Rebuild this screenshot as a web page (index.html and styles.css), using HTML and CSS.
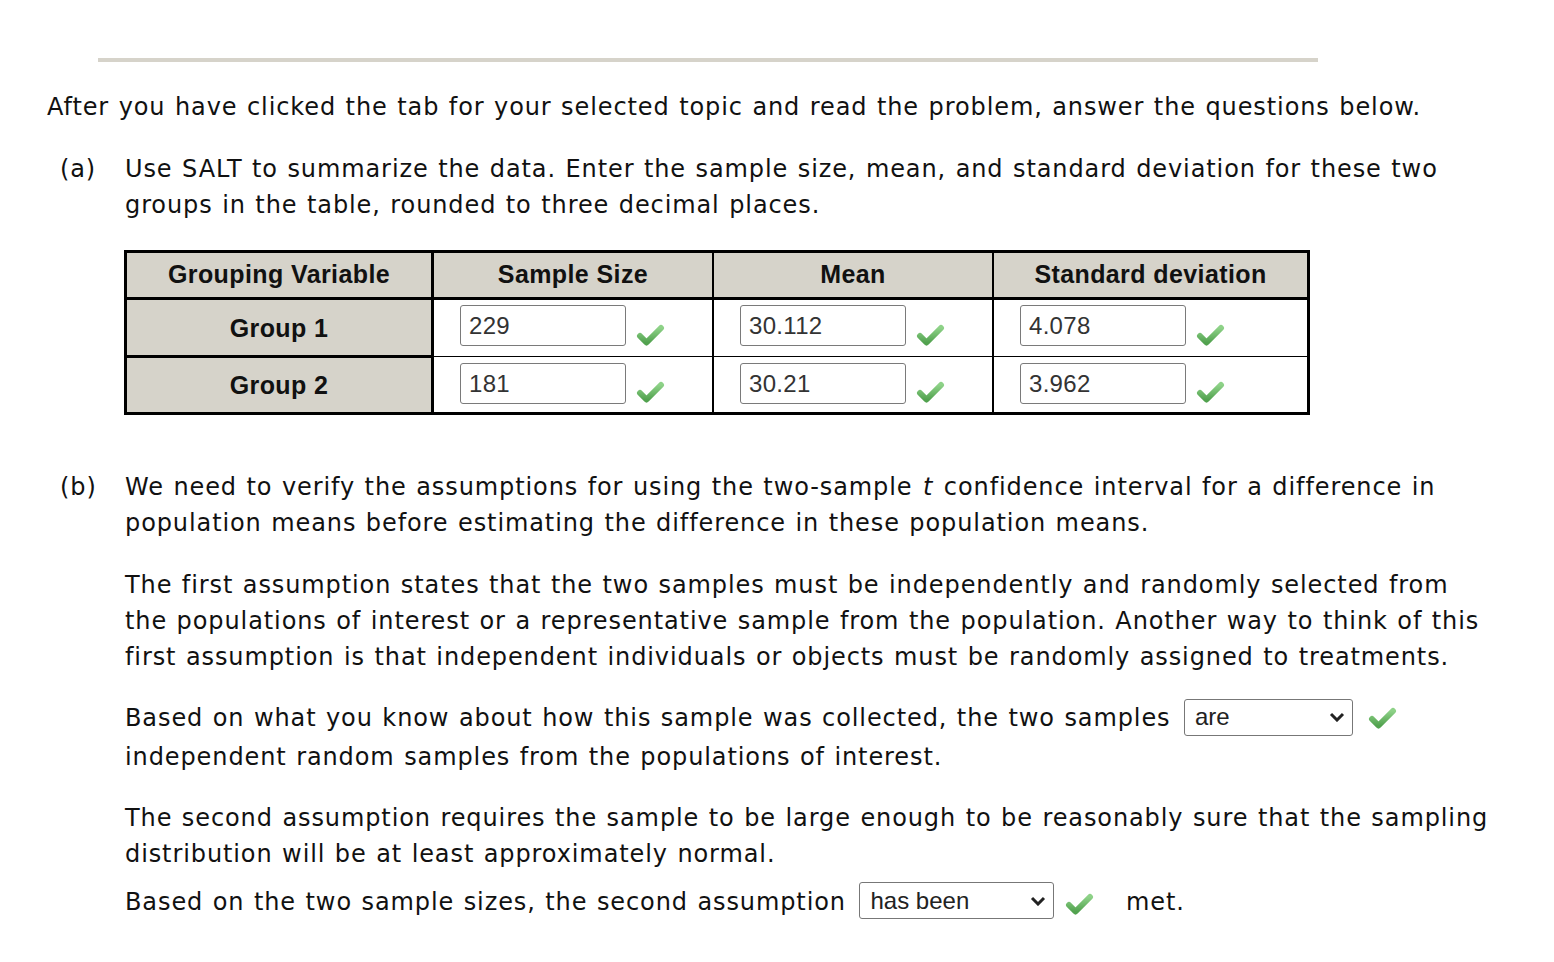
FILE: index.html
```html
<!DOCTYPE html>
<html>
<head>
<meta charset="utf-8">
<link rel="stylesheet" href="styles.css">
</head>
<body>
<div class="page">
  <div class="rule"></div>
  <p class="intro">After you have clicked the tab for your selected topic and read the problem, answer the questions below.</p>

  <div class="part part-a">
    <span class="label">(a)</span>
    <div class="body">
      <p>Use SALT to summarize the data. Enter the sample size, mean, and standard deviation for these two groups in the table, rounded to three decimal places.</p>
      <table class="data">
        <thead>
          <tr>
            <th class="c1">Grouping Variable</th>
            <th class="c2">Sample Size</th>
            <th class="c3">Mean</th>
            <th class="c4">Standard deviation</th>
          </tr>
        </thead>
        <tbody>
          <tr class="r1">
            <th>Group 1</th>
            <td><div class="cell"><span class="box">229</span><svg class="check" viewBox="0 0 30 24"><use href="#chk"/></svg></div></td>
            <td><div class="cell"><span class="box">30.112</span><svg class="check" viewBox="0 0 30 24"><use href="#chk"/></svg></div></td>
            <td><div class="cell"><span class="box">4.078</span><svg class="check" viewBox="0 0 30 24"><use href="#chk"/></svg></div></td>
          </tr>
          <tr class="r2">
            <th>Group 2</th>
            <td><div class="cell"><span class="box">181</span><svg class="check" viewBox="0 0 30 24"><use href="#chk"/></svg></div></td>
            <td><div class="cell"><span class="box">30.21</span><svg class="check" viewBox="0 0 30 24"><use href="#chk"/></svg></div></td>
            <td><div class="cell"><span class="box">3.962</span><svg class="check" viewBox="0 0 30 24"><use href="#chk"/></svg></div></td>
          </tr>
        </tbody>
      </table>
    </div>
  </div>

  <div class="part part-b">
    <span class="label">(b)</span>
    <div class="body">
      <p><span>We need to verify the assumptions for using the two-sample</span> <i class="var">t</i> <span>confidence interval for a difference in</span> <span>population means before estimating the difference in these population means.</span></p>
      <p class="p2">The first assumption states that the two samples must be independently and randomly selected from the populations of interest or a representative sample from the population. Another way to think of this first assumption is that independent individuals or objects must be randomly assigned to treatments.</p>
      <p class="p3">Based on what you know about how this sample was collected, the two samples <span class="sel sel-are"><span>are</span><svg class="chev" viewBox="0 0 16 10"><path d="M2 2 L8 8 L14 2" fill="none" stroke="#222" stroke-width="3"/></svg></span><svg class="check inl" viewBox="0 0 30 24"><use href="#chk"/></svg><br>independent random samples from the populations of interest.</p>
      <p class="p4">The second assumption requires the sample to be large enough to be reasonably sure that the sampling distribution will be at least approximately normal.</p>
      <p class="p5">Based on the two sample sizes, the second assumption <span class="sel sel-has"><span>has been</span><svg class="chev" viewBox="0 0 16 10"><path d="M2 2 L8 8 L14 2" fill="none" stroke="#222" stroke-width="3"/></svg></span><svg class="check inl2" viewBox="0 0 30 24"><use href="#chk"/></svg> <span class="met">met.</span></p>
    </div>
  </div>
</div>

<svg width="0" height="0" class="defs">
  <defs>
    <linearGradient id="g" x1="0" y1="0" x2="0" y2="1">
      <stop offset="0" stop-color="#8ed288"/>
      <stop offset="1" stop-color="#52a24f"/>
    </linearGradient>
    <symbol id="chk" viewBox="0 0 30 24">
      <path d="M5 13 L11.5 19.5 L26 5" fill="none" stroke="url(#g)" stroke-width="6" stroke-linecap="round" stroke-linejoin="round"/>
    </symbol>
  </defs>
</svg>
</body>
</html>
```

FILE: styles.css
```css
html, body {
  margin: 0;
  padding: 0;
  background: #fff;
}
body {
  font-family: "DejaVu Sans", Verdana, sans-serif;
  font-size: 24px;
  line-height: 36px;
  color: #111;
  letter-spacing: 0.9px;
  word-spacing: 1px;
}
.page {
  padding: 58px 0 0 47px;
  width: 1450px;
}
.rule {
  margin-left: 51px;
  width: 1220px;
  height: 4px;
  background: #d6d3ca;
}
p {
  margin: 0;
}
.intro {
  margin-top: 27px;
}
.part {
  display: flex;
  margin-left: 13px;
}
.part-a {
  margin-top: 26px;
}
.part-b {
  margin-top: 54px;
}
.label {
  width: 65px;
  flex: none;
}
.body {
  flex: 1;
}
.var {
  padding: 0 1px;
}
.data {
  margin-top: 27px;
  margin-left: -1px;
  border-collapse: collapse;
  border: 3px solid #000;
  font-family: "Liberation Sans", Arial, sans-serif;
  letter-spacing: 0;
  word-spacing: 0;
}
.data th, .data td {
  padding: 0;
}
.data thead th {
  background: #d6d3ca;
  height: 41px;
  padding-bottom: 3px;
  font-weight: bold;
  font-size: 25px;
  letter-spacing: 0.4px;
  border-bottom: 3px solid #000;
  border-right: 2px solid #000;
  text-align: center;
  vertical-align: middle;
}
.data thead th.c1 { width: 304px; border-right: 3px solid #000; }
.data thead th.c2 { width: 278px; }
.data thead th.c3 { width: 278px; }
.data thead th.c4 { width: 313px; }
.data tbody th {
  background: #d6d3ca;
  font-weight: bold;
  font-size: 25px;
  letter-spacing: 0.4px;
  border-right: 3px solid #000;
  text-align: center;
}
.data tbody tr.r1 th {
  border-bottom: 3px solid #000;
  height: 55px;
}
.data tbody tr.r1 td {
  border-bottom: 1px solid #000;
  height: 56px;
}
.data tbody tr.r2 th, .data tbody tr.r2 td {
  height: 54px;
}
.data td {
  border-right: 2px solid #000;
}
.cell {
  display: flex;
  align-items: center;
  padding-left: 26px;
}
.box {
  box-sizing: border-box;
  width: 166px;
  height: 41px;
  border: 1px solid #7a7a7a;
  border-radius: 3px;
  padding: 0 8px;
  font-size: 24px;
  letter-spacing: 0.3px;
  line-height: 39px;
  color: #333;
  margin-top: -5px;
}
.r2 .box {
  margin-top: -3px;
}
.check {
  width: 30px;
  height: 24px;
  margin-left: 9px;
  margin-top: 14px;
}
.p2 { margin-top: 26px; }
.p3 { margin-top: 24px; line-height: 38px; }
.p4 { margin-top: 24px; }
.p5 { margin-top: 12px; }
.sel {
  display: inline-flex;
  align-items: center;
  justify-content: space-between;
  box-sizing: border-box;
  height: 37px;
  border: 1px solid #777;
  border-radius: 3px;
  padding: 0 7px 0 10px;
  font-family: "Liberation Sans", Arial, sans-serif;
  font-size: 24px;
  letter-spacing: 0;
  word-spacing: 0;
  color: #222;
  vertical-align: middle;
  margin-left: 4px;
  position: relative;
  top: -2px;
}
.sel-are { width: 169px; }
.sel-has { width: 195px; }
.chev {
  width: 16px;
  height: 10px;
}
.check.inl {
  margin: 0 0 0 14px;
  vertical-align: middle;
  position: relative;
  top: -1px;
}
.check.inl2 {
  margin: 0 0 0 10px;
  vertical-align: middle;
  position: relative;
  top: 1px;
}
.met {
  margin-left: 22px;
}
.defs {
  position: absolute;
}
```
